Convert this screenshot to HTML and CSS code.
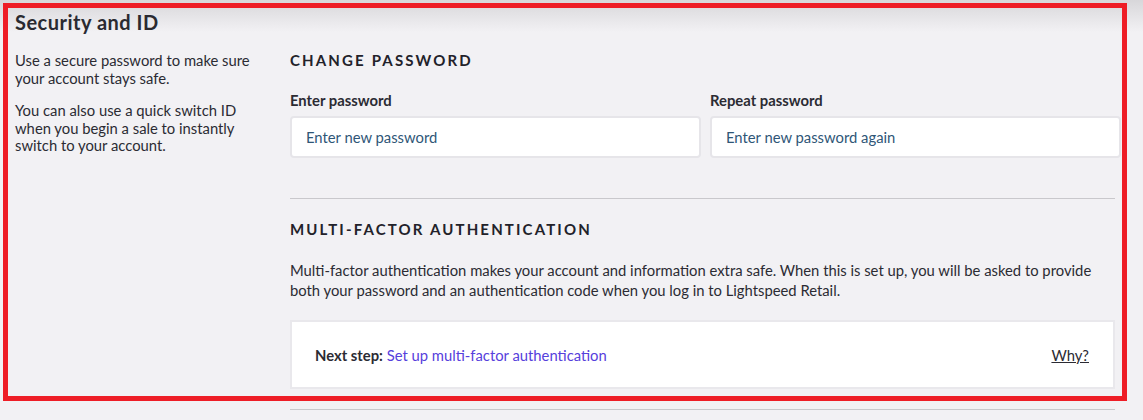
FILE: index.html
```html
<!DOCTYPE html>
<html lang="en">
<head>
    <meta charset="UTF-8">
    <meta name="viewport" content="width=device-width, initial-scale=1.0">
    <title>Security and ID</title>
    <link rel="stylesheet" href="styles.css">
</head>
<body>
    <div class="page">
        <h1 class="page-title">Security and ID</h1>
        <div class="section">
            <div class="section-info">
                <p>Use a secure password to make sure your account stays safe.</p>
                <p>You can also use a quick switch ID when you begin a sale to instantly switch to your account.</p>
            </div>
            <div class="section-body">
                <h2 class="group-title">Change password</h2>
                <div class="fields">
                    <div class="field">
                        <label for="newPassword">Enter password</label>
                        <input type="password" id="newPassword" placeholder="Enter new password">
                    </div>
                    <div class="field">
                        <label for="repeatPassword">Repeat password</label>
                        <input type="password" id="repeatPassword" placeholder="Enter new password again">
                    </div>
                </div>
                <hr class="divider">
                <h2 class="group-title">Multi-factor authentication</h2>
                <p class="group-text">Multi-factor authentication makes your account and information extra safe. When this is set up, you will be asked to provide both your password and an authentication code when you log in to Lightspeed Retail.</p>
                <div class="next-step">
                    <div><strong>Next step:</strong> <a href="#" class="link">Set up multi-factor authentication</a></div>
                    <a href="#" class="why">Why?</a>
                </div>
                <hr class="divider">
            </div>
        </div>
        <div class="highlight"></div>
    </div>
</body>
</html>
```

FILE: styles.css
```css
html, body {
    margin: 0;
    padding: 0;
}
body {
    font-family: Lato, "Open Sans", Arial, sans-serif;
    font-size: 14.8px;
    color: #2b2b33;
    background: linear-gradient(#d8d7da 0, #f2f1f4 32px) #f2f1f4;
    height: 420px;
    overflow: hidden;
}
.page {
    position: relative;
    padding: 10px 0 0 15px;
}
.page-title {
    margin: 0;
    font-size: 20px;
    line-height: 24px;
    font-weight: 700;
    letter-spacing: 0.5px;
    color: #2a2a31;
}
.section {
    display: flex;
    margin-top: 16px;
}
.section-info {
    width: 275px;
    flex-shrink: 0;
}
.section-info p {
    margin: 2px 0 15px;
    width: 245px;
    line-height: 17.5px;
}
.section-body {
    width: 825px;
}
.group-title {
    margin: 0;
    font-size: 15px;
    line-height: 20px;
    font-weight: 700;
    letter-spacing: 2.15px;
    text-transform: uppercase;
    color: #22222a;
}
.fields {
    display: grid;
    grid-template-columns: 411px 411px;
    column-gap: 9px;
    margin-top: 21px;
    margin-right: -7px;
}
.field label {
    display: block;
    font-weight: 700;
    line-height: 18px;
    margin-bottom: 7px;
}
.field input {
    box-sizing: border-box;
    width: 100%;
    height: 42px;
    padding: 0 14px;
    border: 2px solid #e6e5e9;
    border-radius: 4px;
    background: #fff;
    font-family: inherit;
    font-size: 14.8px;
    outline: none;
}
.field input::placeholder {
    color: #2f5677;
    opacity: 1;
}
.divider {
    border: none;
    border-top: 1px solid #c9c8cc;
    margin: 40px 0 20px;
}
.group-text {
    margin: 21px 0 20px;
    line-height: 20px;
}
.next-step {
    display: flex;
    justify-content: space-between;
    align-items: center;
    box-sizing: border-box;
    height: 69px;
    padding: 0 24px 0 23px;
    background: #fff;
    border: 2px solid #e9e8ec;
}
.link {
    color: #5640dc;
    text-decoration: none;
}
.why {
    color: #2b2b33;
    text-decoration: underline;
}
.next-step + .divider {
    margin-top: 20px;
}
.highlight {
    position: absolute;
    left: 3px;
    top: 3px;
    width: 1114px;
    height: 388px;
    border: 5px solid #ee1d26;
}
```
